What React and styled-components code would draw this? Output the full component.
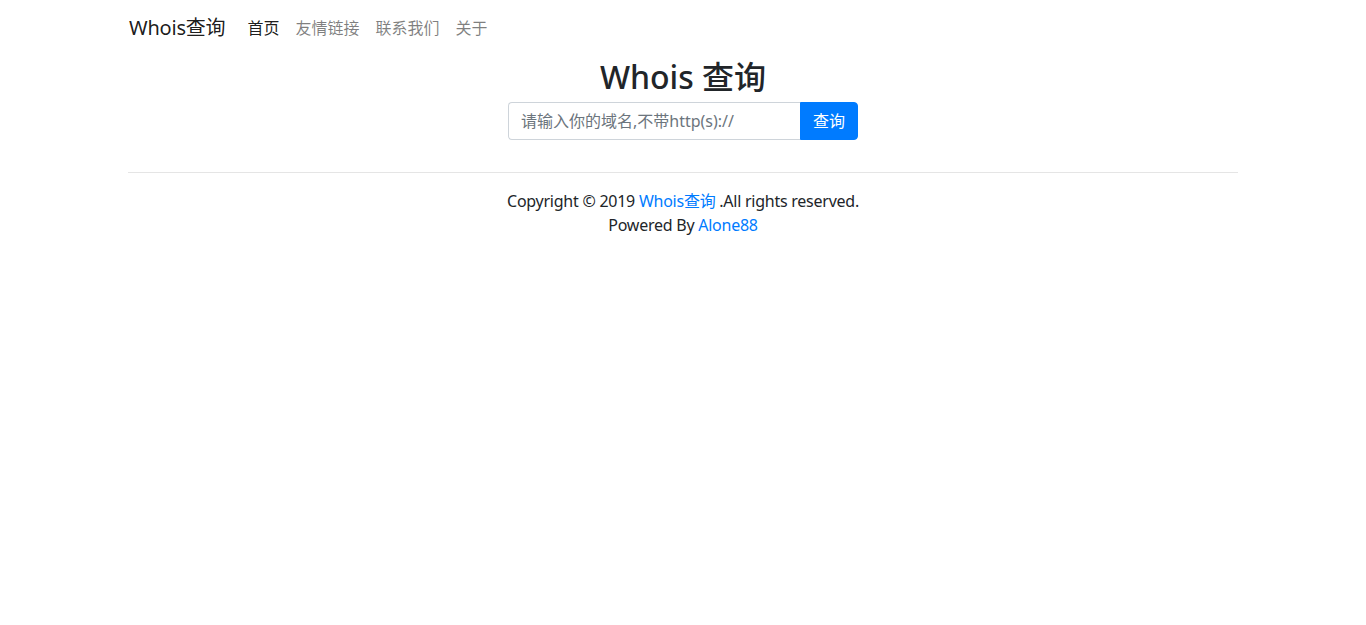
import React from "react";
import styled, { createGlobalStyle } from "styled-components";

const Global = createGlobalStyle`
  *, *::before, *::after { box-sizing: border-box; }
  body {
    margin: 0;
    font-family: "Noto Sans", "Noto Sans CJK SC", sans-serif;
    font-size: 16px;
    line-height: 1.5;
    color: #212529;
    background: #fff;
  }
`;

const Container = styled.div`
  width: 1140px;
  margin: 0 auto;
  padding: 0 15px;
`;

const Navbar = styled.nav`
  display: flex;
  align-items: center;
  padding: 8px 0 8px 1px;
`;

const Brand = styled.a`
  display: inline-block;
  padding: 5px 0;
  margin-right: 14px;
  font-size: 20px;
  line-height: 30px;
  letter-spacing: -0.2px;
  color: rgba(0, 0, 0, 0.9);
  text-decoration: none;
  white-space: nowrap;
`;

const NavList = styled.ul`
  display: flex;
  list-style: none;
  margin: 0;
  padding: 0;
`;

const NavLink = styled.a`
  display: block;
  padding: 8px;
  color: ${(p) => (p.$active ? "rgba(0,0,0,0.9)" : "rgba(0,0,0,0.5)")};
  text-decoration: none;
`;

const Main = styled.main`
  display: flex;
  flex-direction: column;
  align-items: center;
`;

const Title = styled.h2`
  margin: 0 0 6px;
  padding-top: 2px;
  font-size: 32px;
  font-weight: 500;
  line-height: 1.2;
`;

const Form = styled.form`
  display: flex;
  width: 350px;
  margin-bottom: 16px;
`;

const Input = styled.input`
  flex: 1 1 auto;
  min-width: 0;
  height: 38px;
  padding: 6px 12px;
  font: inherit;
  font-size: 16px;
  color: #495057;
  border: 1px solid #ced4da;
  border-right: 0;
  border-radius: 4px 0 0 4px;
  outline: none;
  &::placeholder { color: #6c757d; opacity: 1; }
`;

const Button = styled.button`
  height: 38px;
  padding: 6px 12px;
  font: inherit;
  font-size: 16px;
  color: #fff;
  background: #007bff;
  border: 1px solid #007bff;
  border-radius: 0 4px 4px 0;
  cursor: pointer;
`;

const Rule = styled.hr`
  margin: 16px 0;
  border: 0;
  border-top: 1px solid rgba(0, 0, 0, 0.1);
`;

const Footer = styled.footer`
  text-align: center;
  letter-spacing: -0.25px;
`;

const Line = styled.div``;

const Link = styled.a`
  color: #007bff;
  text-decoration: none;
`;

export default function App() {
  return (
    <>
      <Global />
      <Container>
        <Navbar>
          <Brand href="#">Whois查询</Brand>
          <NavList>
            <li><NavLink href="#" $active>首页</NavLink></li>
            <li><NavLink href="#">友情链接</NavLink></li>
            <li><NavLink href="#">联系我们</NavLink></li>
            <li><NavLink href="#">关于</NavLink></li>
          </NavList>
        </Navbar>
        <Main>
          <Title>Whois 查询</Title>
          <Form onSubmit={(e) => e.preventDefault()}>
            <Input placeholder="请输入你的域名,不带http(s)://" />
            <Button type="submit">查询</Button>
          </Form>
        </Main>
        <Rule />
        <Footer>
          <Line>
            Copyright © 2019 <Link href="#">Whois查询</Link> .All rights reserved.
          </Line>
          <Line>
            Powered By <Link href="#">Alone88</Link>
          </Line>
        </Footer>
      </Container>
    </>
  );
}
